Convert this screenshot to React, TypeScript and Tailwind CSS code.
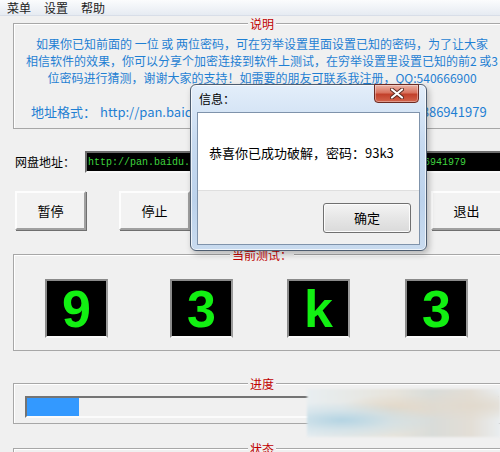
import type { ReactNode } from 'react';

const cjk = "font-['Noto_Sans_CJK_SC','Microsoft_YaHei',sans-serif]";

function GroupBox({ title, className, children }: { title: string; className: string; children?: ReactNode }) {
  return (
    <div className={`relative w-[498px] border border-[#a7a7a7] shadow-[inset_1px_1px_0_#fff] ${className}`}>
      <span className="absolute left-1/2 top-0 -translate-x-1/2 -translate-y-1/2 bg-[#f0f0f0] px-[2px] text-[12px] leading-[14px] text-[#c00000]">
        {title}
      </span>
      {children}
    </div>
  );
}

function Digit({ value, className }: { value: string; className: string }) {
  return (
    <div
      className={`flex h-[59px] w-[63px] items-center justify-center border-2 border-t-[#8a8a8a] border-l-[#8a8a8a] border-r-[#9a9a9a] border-b-[#fafafa] bg-black ${className}`}
    >
      <span className="font-['Liberation_Sans',Arial,sans-serif] text-[52px] font-bold leading-none text-[#12f012]">{value}</span>
    </div>
  );
}

const buttons = ['暂停', '停止', '开始', '设置', '退出'];

export default function App() {
  return (
    <div className={`relative h-[452px] w-[500px] overflow-hidden bg-[#f0f0f0] text-black ${cjk}`}>
      {/* menu bar */}
      <div className="flex h-[16px] items-center gap-[13px] border-b border-[#d8dee8] bg-[linear-gradient(#fbfcfd,#e6ebf2)] pl-[7px] text-[12px] leading-[16px] text-[#222]">
        <span>菜单</span>
        <span>设置</span>
        <span>帮助</span>
      </div>

      <div className="w-[522px] pl-[13px]">
        {/* 说明 */}
        <GroupBox title="说明" className="mt-[7px] h-[106px] pt-[11px] text-[12px] leading-[17px] text-[#1f7fd3]">
          <p className="whitespace-nowrap text-center">如果你已知前面的 一位 或 两位密码，可在穷举设置里面设置已知的密码，为了让大家</p>
          <p className="whitespace-nowrap text-center">相信软件的效果，你可以分享个加密连接到软件上测试，在穷举设置里设置已知的前2 或3</p>
          <p className="whitespace-nowrap text-center">位密码进行猜测，谢谢大家的支持！如需要的朋友可联系我注册，QQ:540666900</p>
          <p className="mt-[17px] flex whitespace-nowrap pl-[17px] text-[13px]">
            <span className="w-[69px]">地址格式：</span>
            <span>http://pan.baidu.com/share/link?shareid=2870&amp;uk=3886941979</span>
          </p>
        </GroupBox>

        {/* 网盘地址 */}
        <div className="mt-[22px] flex h-[22px] items-center">
          <span className="ml-[2px] w-[70px] text-[12px]">网盘地址：</span>
          <div className="flex h-[22px] flex-1 items-center border-2 border-t-[#6e6e6e] border-l-[#6e6e6e] border-r-[#e0e0e0] border-b-[#f8f8f8] bg-black pl-[1px] font-['Liberation_Mono',monospace] text-[10px] text-[#3fd33f]">
            http://pan.baidu.com/share/link?shareid=2870641970&amp;uk=886941979
          </div>
        </div>

        {/* buttons */}
        <div className="ml-[2px] mt-[18px] flex gap-[33px]">
          {buttons.map((b) => (
            <button
              key={b}
              className="h-[39px] w-[71px] shrink-0 border-2 border-t-[#fdfdfd] border-l-[#fdfdfd] border-r-[#a0a0a0] border-b-[#a0a0a0] bg-[#f2f2f2] text-[13px] shadow-[1px_1px_0_#6f6f6f]"
            >
              {b}
            </button>
          ))}
        </div>

        {/* 当前测试 */}
        <GroupBox title="当前测试：" className="mt-[24px] flex h-[97px] pt-[24px]">
          <Digit value="9" className="ml-[31px]" />
          <Digit value="3" className="ml-[62px]" />
          <Digit value="k" className="ml-[54px]" />
          <Digit value="3" className="ml-[55px]" />
        </GroupBox>

        {/* 进度 */}
        <GroupBox title="进度" className="mt-[32px] h-[41px] pl-[11px] pt-[12px]">
          <div className="h-[22px] w-[474px] border-2 border-t-[#747474] border-l-[#747474] border-r-[#e4e4e4] border-b-[#fbfbfb] bg-[#f0f0f0]">
            <div className="h-full w-[52px] bg-[#3399ff]" />
          </div>
        </GroupBox>

        {/* 状态 */}
        <GroupBox title="状态" className="mt-[24px] h-[60px]" />
      </div>

      {/* blurred watermark */}
      <div className="absolute left-[307px] top-[389px] h-[48px] w-[193px] bg-[radial-gradient(ellipse_at_18%_65%,#b4d4e3_0%,rgba(200,222,232,0.6)_22%,transparent_42%),radial-gradient(ellipse_at_45%_40%,#e3d8c8_0%,transparent_35%),radial-gradient(ellipse_at_85%_35%,#e2dace_0%,transparent_35%),linear-gradient(90deg,#e8eef1,#e7e4dc_45%,#d9dcd9_65%,#e3ded6_85%,#e9edef)] blur-[1px]" />

      {/* message box */}
      <div className="absolute left-[190px] top-[84px] w-[237px] rounded-[6px] border border-[#4e5d70] bg-[linear-gradient(180deg,#e3eefa_0%,#c7daf0_35%,#bcd2eb_70%,#c9dbef_100%)] px-[6px] pb-[5px] pt-[27px] shadow-[inset_0_0_0_1px_rgba(255,255,255,0.7),2px_3px_6px_rgba(0,0,0,0.25)]">
        <span className="absolute left-[8px] top-[5px] text-[12px] leading-[17px] text-black">信息：</span>
        <div className="absolute right-[7px] top-[-1px] flex h-[19px] w-[45px] items-center justify-center rounded-b-[4px] border border-[#6c2a22] bg-[linear-gradient(180deg,#eab3a6_0%,#d9735f_45%,#c2412b_55%,#d3644c_100%)] shadow-[inset_0_0_0_1px_rgba(255,255,255,0.35)]">
          <svg width="14" height="11" viewBox="0 0 14 11">
            <path d="M2 1.5 L12 9.5 M12 1.5 L2 9.5" stroke="#5a2a22" strokeWidth="4" strokeLinecap="round" />
            <path d="M2 1.5 L12 9.5 M12 1.5 L2 9.5" stroke="#ffffff" strokeWidth="2.2" strokeLinecap="round" />
          </svg>
        </div>
        <div className="border border-[#7f93ab] bg-[#f0f0f0]">
          <div className="h-[77px] bg-white pl-[11px] pt-[31px] text-[13px] leading-[18px]">恭喜你已成功破解，密码：93k3</div>
          <div className="flex h-[54px] justify-end border-t border-[#dfdfdf] pr-[8px] pt-[12px]">
            <button className="h-[30px] w-[88px] rounded-[3px] border border-[#707070] bg-[linear-gradient(#f4f4f4,#e6e6e6_50%,#dadada)] text-[13px] shadow-[inset_0_0_0_1px_#fcfcfc]">
              确定
            </button>
          </div>
        </div>
      </div>
    </div>
  );
}
